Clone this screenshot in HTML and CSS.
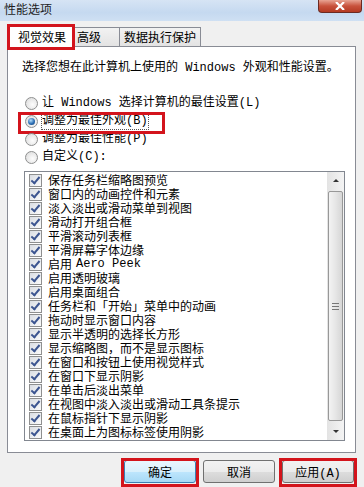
FILE: index.html
```html
<!DOCTYPE html>
<html lang="zh-CN">
<head>
    <meta charset="UTF-8">
    <title>性能选项</title>
    <link rel="stylesheet" href="styles.css">
</head>
<body>
    <div class="window">
        <div class="titlebar">
            <span class="title">性能选项</span>
            <span class="close">
                <svg width="10" height="8" viewBox="0 0 10 8"><path d="M1 0 L9 8 M9 0 L1 8" stroke="#fff" stroke-width="2.2"/></svg>
            </span>
        </div>

        <div class="tabs">
            <div class="tab active mark">视觉效果</div>
            <div class="tab tab-adv">高级</div>
            <div class="tab">数据执行保护</div>
        </div>

        <div class="panel">
            <div class="intro">选择您想在此计算机上使用的 Windows 外观和性能设置。</div>

            <div class="options">
                <div class="opt"><span class="radio"></span>让 Windows 选择计算机的最佳设置(L)</div>
                <div class="opt mark-opt"><span class="radio on"></span><span class="focus">调整为最佳外观(B)</span></div>
                <div class="opt"><span class="radio"></span>调整为最佳性能(P)</div>
                <div class="opt"><span class="radio"></span>自定义(C):</div>
            </div>

            <div class="list">
                <div class="items">
                    <div class="item"><span class="cb"></span>保存任务栏缩略图预览</div>
                    <div class="item"><span class="cb"></span>窗口内的动画控件和元素</div>
                    <div class="item"><span class="cb"></span>淡入淡出或滑动菜单到视图</div>
                    <div class="item"><span class="cb"></span>滑动打开组合框</div>
                    <div class="item"><span class="cb"></span>平滑滚动列表框</div>
                    <div class="item"><span class="cb"></span>平滑屏幕字体边缘</div>
                    <div class="item"><span class="cb"></span>启用 <span class="latin">Aero Peek</span></div>
                    <div class="item"><span class="cb"></span>启用透明玻璃</div>
                    <div class="item"><span class="cb"></span>启用桌面组合</div>
                    <div class="item"><span class="cb"></span>任务栏和「开始」菜单中的动画</div>
                    <div class="item"><span class="cb"></span>拖动时显示窗口内容</div>
                    <div class="item"><span class="cb"></span>显示半透明的选择长方形</div>
                    <div class="item"><span class="cb"></span>显示缩略图，而不是显示图标</div>
                    <div class="item"><span class="cb"></span>在窗口和按钮上使用视觉样式</div>
                    <div class="item"><span class="cb"></span>在窗口下显示阴影</div>
                    <div class="item"><span class="cb"></span>在单击后淡出菜单</div>
                    <div class="item"><span class="cb"></span>在视图中淡入淡出或滑动工具条提示</div>
                    <div class="item"><span class="cb"></span>在鼠标指针下显示阴影</div>
                    <div class="item"><span class="cb"></span>在桌面上为图标标签使用阴影</div>
                </div>
                <div class="scrollbar">
                    <div class="arrow up"></div>
                    <div class="track">
                        <div class="thumb"><span class="grip"></span></div>
                    </div>
                    <div class="arrow down"></div>
                </div>
            </div>
        </div>

        <div class="buttons">
            <button class="btn default mark">确定</button>
            <button class="btn">取消</button>
            <button class="btn mark">应用(A)</button>
        </div>
    </div>
</body>
</html>
```

FILE: styles.css
```css
body {
    margin: 0;
    padding: 0;
    font-family: "Liberation Mono", "Noto Sans CJK SC", monospace;
    font-size: 12px;
    color: #000;
    background: #f0f0f0;
}

.window {
    width: 364px;
    height: 487px;
    overflow: hidden;
    background: #f0f0f0;
}

/* 标题栏 */
.titlebar {
    height: 21px;
    display: flex;
    align-items: flex-start;
    background: linear-gradient(to bottom, #d6e4f4, #c5d9f0 60%, #cfe0f3);
}

.title {
    font-family: "Noto Sans CJK SC", sans-serif;
    font-size: 12px;
    line-height: 18px;
    padding-left: 4px;
    color: #1e1e1e;
}

.close {
    margin-left: auto;
    margin-right: 2px;
    width: 44px;
    height: 13px;
    box-sizing: border-box;
    border: 1px solid #6b2a22;
    border-top: none;
    border-radius: 0 0 4px 4px;
    background: linear-gradient(to bottom, #e8a493, #c8523c 50%, #b43a22);
    display: flex;
    justify-content: center;
    align-items: center;
}

/* 选项卡 */
.tabs {
    display: flex;
    align-items: flex-end;
    height: 21px;
    margin-top: 4px;
    padding-left: 10px;
}

.tab {
    font-family: "Noto Sans CJK SC", sans-serif;
    height: 18px;
    line-height: 18px;
    padding: 0 4px;
    border: 1px solid #898c95;
    border-bottom: none;
    background: linear-gradient(to bottom, #f2f2f2, #e3e3e3);
    margin-left: -1px;
    position: relative;
}

.tab-adv {
    width: 38px;
}

.tab.active {
    height: 21px;
    line-height: 21px;
    background: #fff;
    margin-bottom: -1px;
    z-index: 2;
    padding: 0 6px 0 8px;
}

/* 红色标记框 */
.mark {
    position: relative;
}

.mark::after {
    content: "";
    position: absolute;
    top: -2px;
    left: -3px;
    right: -3px;
    bottom: -2px;
    border: 3px solid #d3141c;
    pointer-events: none;
}

.tab.mark::after {
    top: -2px;
    bottom: -3px;
}

/* 面板 */
.panel {
    margin-left: 7px;
    width: 349px;
    height: 407px;
    box-sizing: border-box;
    border: 1px solid #898c95;
    background: #fff;
    padding: 14px 0 0 16px;
}

.intro {
    margin-left: -2px;
    line-height: 14px;
}

.options {
    margin-top: 19px;
}

.opt {
    display: flex;
    align-items: center;
    height: 18px;
    line-height: 16px;
    padding-left: 1px;
}

.mark-opt {
    position: relative;
}

.mark-opt::after {
    content: "";
    position: absolute;
    top: 0;
    left: -6px;
    width: 147px;
    height: 22px;
    box-sizing: border-box;
    border: 3px solid #d3141c;
}

.focus {
    outline: 1px dotted #555;
    outline-offset: 0;
}

.radio {
    width: 13px;
    height: 13px;
    box-sizing: border-box;
    border: 1px solid #8e8f8f;
    border-radius: 50%;
    background: radial-gradient(circle at 60% 60%, #fdfdfd, #d8d8d8);
    margin-right: 4px;
    position: relative;
    flex-shrink: 0;
}

.radio.on::after {
    content: "";
    position: absolute;
    top: 2px;
    left: 2px;
    width: 7px;
    height: 7px;
    border-radius: 50%;
    background: radial-gradient(circle at 40% 35%, #b6e0fb, #2b6db3 55%, #123a6b);
}

/* 复选框列表 */
.list {
    display: flex;
    margin-top: 5px;
    width: 321px;
    height: 270px;
    box-sizing: border-box;
    border: 1px solid #828790;
    background: #fff;
}

.items {
    flex: 1;
    padding-top: 1px;
    overflow: hidden;
}

.item {
    display: flex;
    align-items: center;
    height: 14px;
    line-height: 14px;
    padding-left: 4px;
    white-space: nowrap;
    font-family: "Noto Sans CJK SC", sans-serif;
}

.latin {
    font-family: "Liberation Mono", monospace;
    margin-left: 4px;
}

.cb {
    width: 13px;
    height: 13px;
    box-sizing: border-box;
    border: 1px solid #8e8f8f;
    background: linear-gradient(135deg, #d9dde3, #fbfbfb);
    margin-right: 6px;
    position: relative;
    flex-shrink: 0;
}

.cb::after {
    content: "";
    position: absolute;
    left: 3px;
    top: 0;
    width: 3px;
    height: 7px;
    border-right: 2px solid #3c5590;
    border-bottom: 2px solid #3c5590;
    transform: rotate(40deg);
}

/* 滚动条 */
.scrollbar {
    width: 17px;
    display: flex;
    flex-direction: column;
    background: linear-gradient(to right, #e3e3e3, #f4f4f4);
}

.arrow {
    height: 17px;
    display: flex;
    justify-content: center;
    align-items: center;
}

.arrow::before {
    content: "";
    border-left: 3px solid transparent;
    border-right: 3px solid transparent;
}

.arrow.up::before {
    border-bottom: 3px solid #333;
}

.arrow.down::before {
    border-top: 3px solid #333;
}

.track {
    flex: 1;
    padding: 2px 0;
    display: flex;
}

.thumb {
    flex: 1;
    margin: 0 1px;
    border: 1px solid #989898;
    border-radius: 2px;
    background: linear-gradient(to right, #f3f3f3, #e6e6e6 50%, #d6d6d6);
    display: flex;
    justify-content: center;
    align-items: center;
}

.grip {
    width: 7px;
    height: 5px;
    border-top: 1px solid #777;
    border-bottom: 1px solid #777;
    background: linear-gradient(#777, #777) center / 100% 1px no-repeat;
}

/* 底部按钮 */
.buttons {
    display: flex;
    gap: 7px;
    margin-top: 7px;
    padding-left: 124px;
}

.btn {
    width: 72px;
    height: 23px;
    border: 1px solid #707070;
    border-radius: 3px;
    font-family: "Liberation Mono", "Noto Sans CJK SC", monospace;
    font-size: 12px;
    color: #000;
    padding: 0;
    background: linear-gradient(to bottom, #f2f2f2, #ebebeb 50%, #dddddd 51%, #cfcfcf);
}

.btn.default {
    border-color: #3c7fb1;
    background: linear-gradient(to bottom, #eaf6fd, #d9f0fc 50%, #bee6fd 51%, #a7d9f5);
}

.btn.mark::after {
    top: -3px;
    left: -4px;
    right: -4px;
    bottom: -5px;
}
```
